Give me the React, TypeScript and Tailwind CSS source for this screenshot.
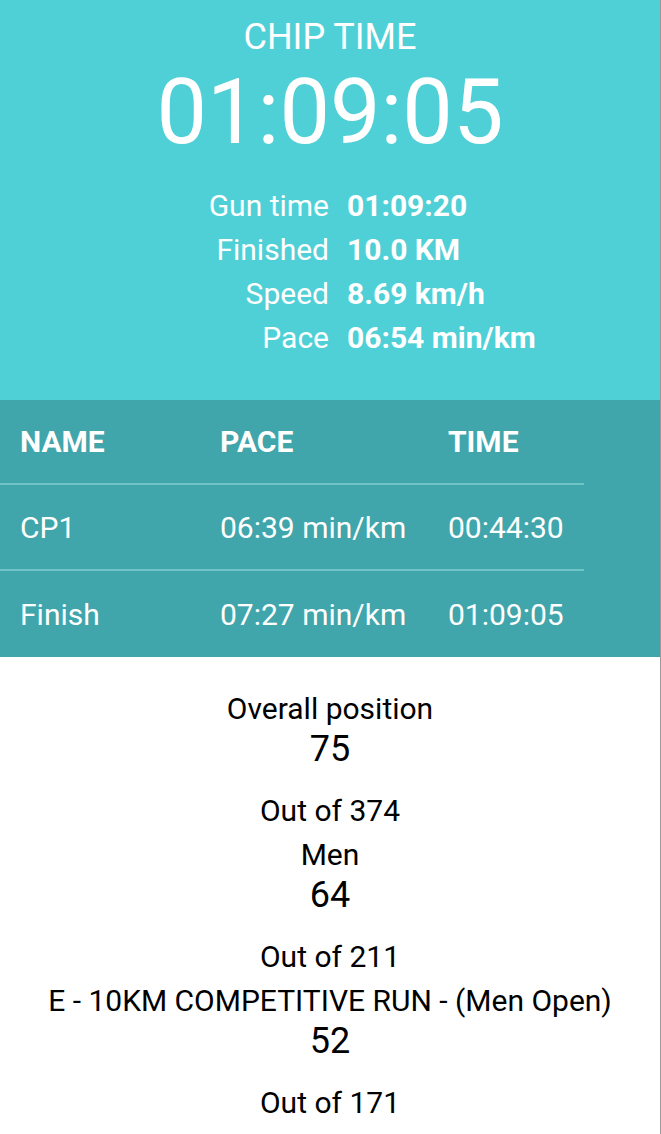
const splits = [
  { name: "CP1", pace: "06:39 min/km", time: "00:44:30" },
  { name: "Finish", pace: "07:27 min/km", time: "01:09:05" },
];

const details = [
  { label: "Gun time", value: "01:09:20" },
  { label: "Finished", value: "10.0 KM" },
  { label: "Speed", value: "8.69 km/h" },
  { label: "Pace", value: "06:54 min/km" },
];

const positions = [
  { label: "Overall position", place: "75", total: "374" },
  { label: "Men", place: "64", total: "211" },
  { label: "E - 10KM COMPETITIVE RUN - (Men Open)", place: "52", total: "171" },
];

export default function App() {
  return (
    <main className="min-h-[1134px] border-r border-[#9a9a9a] bg-white font-['Roboto',sans-serif]">
      {/* Chip time header */}
      <div className="bg-[#4fd0d7] pb-[40px] pt-[15px] text-white">
        <p className="text-center text-[36px] leading-[44px]">CHIP TIME</p>
        <p className="mt-[4px] text-center text-[90px] leading-[100px]">01:09:05</p>
        <div className="mt-[21px]">
          {details.map((d) => (
            <div key={d.label} className="grid grid-cols-[329px_1fr] gap-[18px] text-[30px] leading-[44px]">
              <span className="text-right">{d.label}</span>
              <span className="font-bold">{d.value}</span>
            </div>
          ))}
        </div>
      </div>

      {/* Splits */}
      <div className="bg-[#40a6ab] text-white">
        <div className="w-[584px] text-[30px]">
          <div className="grid h-[85px] grid-cols-[200px_228px_156px] items-center border-b-2 border-[#70c3c7] font-bold">
            <span className="pl-[20px]">NAME</span>
            <span className="pl-[20px]">PACE</span>
            <span className="pl-[20px]">TIME</span>
          </div>
          {splits.map((s, i) => (
            <div
              key={s.name}
              className={`grid h-[86px] grid-cols-[200px_228px_156px] items-center ${
                i < splits.length - 1 ? "border-b-2 border-[#70c3c7]" : ""
              }`}
            >
              <span className="pl-[20px]">{s.name}</span>
              <span className="pl-[20px]">{s.pace}</span>
              <span className="pl-[20px]">{s.time}</span>
            </div>
          ))}
        </div>
      </div>

      {/* Positions */}
      <div className="flex flex-col gap-[4px] pt-[32px] text-center text-black">
        {positions.map((p) => (
          <div key={p.label}>
            <p className="text-[30px] leading-[40px]">{p.label}</p>
            <p className="text-[36px] leading-[40px]">{p.place}</p>
            <p className="mt-[22px] text-[30px] leading-[40px]">Out of {p.total}</p>
          </div>
        ))}
      </div>
    </main>
  );
}
